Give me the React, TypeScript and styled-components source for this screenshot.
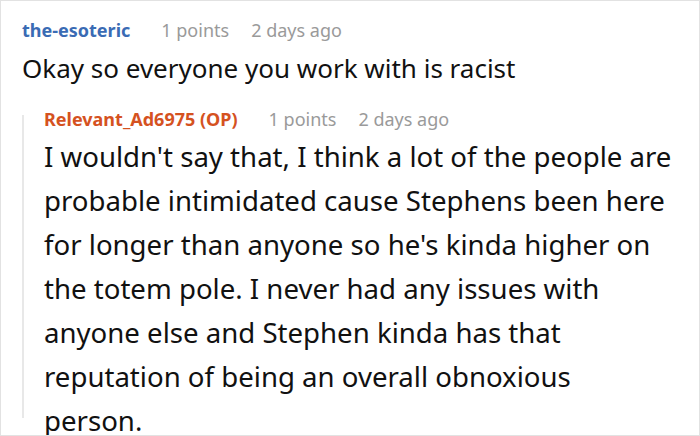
import React from "react";
import styled, { createGlobalStyle } from "styled-components";

const GlobalStyle = createGlobalStyle`
  html, body {
    margin: 0;
    padding: 0;
    background: #ffffff;
  }
  body {
    font-family: "Noto Sans", "Open Sans", sans-serif;
    color: #111;
  }
`;

const Frame = styled.div`
  box-sizing: border-box;
  width: 700px;
  height: 436px;
  border: 1px solid #e2e2e2;
  overflow: hidden;
  padding: 14px 24px 0 21px;
`;

const Comment = styled.div`
  display: flex;
  flex-direction: column;
`;

const Meta = styled.div`
  display: flex;
  align-items: baseline;
  gap: 22px;
  font-size: 18px;
  line-height: 30px;
  white-space: nowrap;
`;

const Author = styled.span<{ $op?: boolean }>`
  font-weight: 700;
  color: ${(p) => (p.$op ? "#d5521f" : "#3a6bb4")};
  margin-right: 9px;
`;

const Stat = styled.span`
  color: #9a9a9a;
`;

const Body = styled.p<{ $size: number; $lh: number; $top?: number }>`
  margin: ${(p) => p.$top ?? 0}px 0 0;
  font-size: ${(p) => p.$size}px;
  line-height: ${(p) => p.$lh}px;
  color: #111;
`;

const Replies = styled.div`
  position: relative;
  margin-top: 16px;
  padding-left: 22px;

  &::before {
    content: "";
    position: absolute;
    left: 0;
    top: 11px;
    bottom: 24px;
    width: 2px;
    background: #e8e8e8;
  }
`;

export default function App() {
  return (
    <>
      <GlobalStyle />
      <Frame>
        <Comment>
          <Meta>
            <Author>the-esoteric</Author>
            <Stat>1 points</Stat>
            <Stat>2 days ago</Stat>
          </Meta>
          <Body $size={26} $lh={40} $top={3}>
            Okay so everyone you work with is racist
          </Body>
          <Replies>
            <Comment>
              <Meta>
                <Author $op>Relevant_Ad6975 (OP)</Author>
                <Stat>1 points</Stat>
                <Stat>2 days ago</Stat>
              </Meta>
              <Body $size={27.6} $lh={44}>
                I wouldn't say that, I think a lot of the people are probable
                intimidated cause Stephens been here for longer than anyone so
                he's kinda higher on the totem pole. I never had any issues with
                anyone else and Stephen kinda has that reputation of being an
                overall obnoxious person.
              </Body>
            </Comment>
          </Replies>
        </Comment>
      </Frame>
    </>
  );
}
